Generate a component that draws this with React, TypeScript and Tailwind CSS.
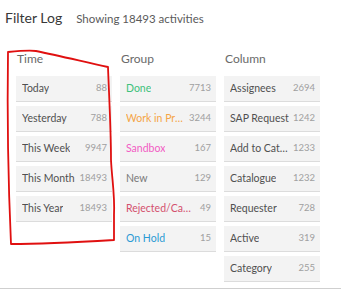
import React from 'react';

type Item = { label: string; count: number; color?: string };

const time: Item[] = [
  { label: 'Today', count: 88 },
  { label: 'Yesterday', count: 788 },
  { label: 'This Week', count: 9947 },
  { label: 'This Month', count: 18493 },
  { label: 'This Year', count: 18493 },
];

const group: Item[] = [
  { label: 'Done', count: 7713, color: 'text-[#3ec27c]' },
  { label: 'Work in Progress', count: 3244, color: 'text-[#f5a546]' },
  { label: 'Sandbox', count: 167, color: 'text-[#f25cc4]' },
  { label: 'New', count: 129, color: 'text-[#7a7a7a]' },
  { label: 'Rejected/Cancelled', count: 49, color: 'text-[#d3506e]' },
  { label: 'On Hold', count: 15, color: 'text-[#2b9ad4]' },
];

const column: Item[] = [
  { label: 'Assignees', count: 2694 },
  { label: 'SAP Request', count: 1242 },
  { label: 'Add to Catalogue', count: 1233 },
  { label: 'Catalogue', count: 1232 },
  { label: 'Requester', count: 728 },
  { label: 'Active', count: 319 },
  { label: 'Category', count: 255 },
];

const FilterColumn = ({ title, items }: { title: string; items: Item[] }) => (
  <div className="w-[96px] flex flex-col">
    <div className="h-[20px] flex items-center text-[12px] text-[#6a6a6a] px-[1px]">{title}</div>
    <div className="mt-[7px] flex flex-col gap-[4px]">
      {items.map((it) => (
        <div
          key={it.label}
          className="h-[26px] flex items-center justify-between bg-[#f3f3f3] border-b border-[#dcdcdc] pl-[6px] pr-[5px]"
        >
          <span className={`truncate text-[10.5px] ${it.color ?? 'text-[#505050]'}`}>{it.label}</span>
          <span className="text-[9.5px] text-[#a0a0a0] ml-[4px] shrink-0">{it.count}</span>
        </div>
      ))}
    </div>
  </div>
);

export default function App() {
  return (
    <div className="relative w-[341px] h-[291px] bg-white overflow-hidden" style={{ fontFamily: 'Lato, "Noto Sans", sans-serif' }}>
      <div className="flex items-baseline gap-[14px] px-[5px] pt-[7px]">
        <span className="text-[14px] text-[#383838]">Filter Log</span>
        <span className="text-[11.5px] text-[#5a5a5a]">Showing 18493 activities</span>
      </div>
      <div className="flex gap-[8px] pl-[16px] mt-[21px]">
        <FilterColumn title="Time" items={time} />
        <FilterColumn title="Group" items={group} />
        <FilterColumn title="Column" items={column} />
      </div>
      <div className="absolute left-0 right-0 bottom-[2px] border-t border-[#cfcfcf]" />
      {/* hand-drawn annotation */}
      <svg className="absolute left-0 top-0 pointer-events-none" width="341" height="291">
        <path
          d="M8 52 C 18 51, 30 50, 36 51 C 60 56, 85 62, 108 67 C 109 95, 111 130, 111 160 C 112 180, 115 195, 114 215 C 114 225, 114 233, 114 240 C 80 242, 40 244, 11 244 C 9 200, 7 120, 8 52 Z"
          fill="none"
          stroke="#e01010"
          strokeWidth="1.8"
          strokeLinejoin="round"
        />
      </svg>
    </div>
  );
}
